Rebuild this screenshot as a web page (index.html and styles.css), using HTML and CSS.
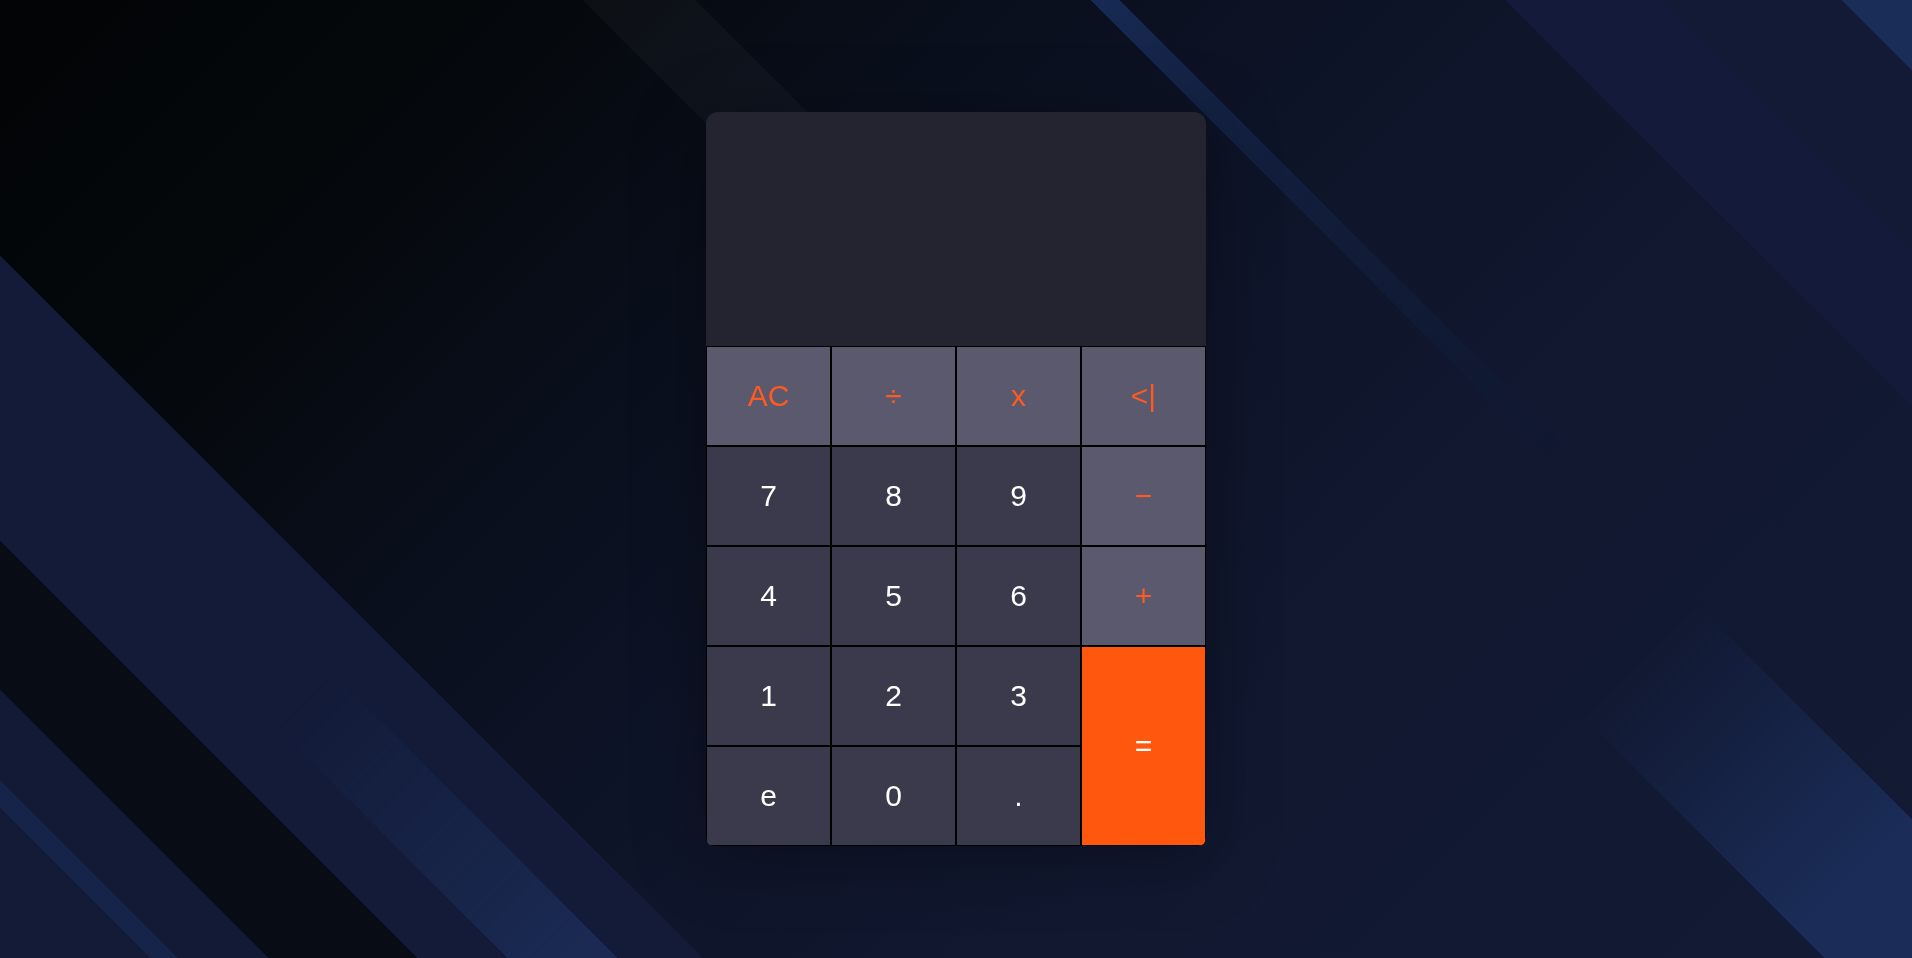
FILE: index.html
```html
<!DOCTYPE html>
<html lang="en">
<head>
<meta charset="utf-8">
<title>Calculator</title>
<link rel="stylesheet" href="styles.css">
</head>
<body>
<div class="page">
  <div class="calculator">
    <div class="display"></div>
    <div class="keys">
      <button class="key op">AC</button>
      <button class="key op">÷</button>
      <button class="key op">x</button>
      <button class="key op">&lt;|</button>
      <button class="key">7</button>
      <button class="key">8</button>
      <button class="key">9</button>
      <button class="key op">−</button>
      <button class="key">4</button>
      <button class="key">5</button>
      <button class="key">6</button>
      <button class="key op">+</button>
      <button class="key">1</button>
      <button class="key">2</button>
      <button class="key">3</button>
      <button class="key equals">=</button>
      <button class="key">e</button>
      <button class="key">0</button>
      <button class="key">.</button>
    </div>
  </div>
</div>
</body>
</html>
```
FILE: styles.css
```css
* { box-sizing: border-box; }

html, body {
  margin: 0;
  height: 100%;
}

body {
  overflow: hidden;
  font-family: "Liberation Sans", Arial, sans-serif;
  background:
    linear-gradient(45deg,
      #131b36 0%, #131b36 5.23%,
      #16244a 5.23%, #16244a 6.17%,
      #121a35 6.17%, #121a35 9.34%,
      #080c14 9.34%, #080c14 14.56%,
      #131b38 14.56%, #131b38 24.46%,
      transparent 24.46%, transparent 85.85%,
      #141b3a 85.85%, #141b3a 91.25%,
      #121a35 91.25%, #121a35 97.53%,
      #1a2d58 97.53%, #1a2d58 100%),
    linear-gradient(135deg,
      #020405 0%, #05090d 20%, #0a0f1d 35%, #0e1428 50%, #111830 70%, #131a34 100%);
}

body::before {
  content: "";
  position: fixed;
  inset: 0;
  pointer-events: none;
  background: linear-gradient(45deg,
    transparent 53.69%, rgba(255,255,255,0.03) 53.69%, rgba(255,255,255,0.03) 57.6%,
    transparent 57.6%, transparent 71.39%,
    #1b3263 71.39%, #1b3263 72.37%, transparent 72.37%);
  -webkit-mask-image: linear-gradient(135deg, #000 32%, rgba(0,0,0,0.35) 50%, transparent 70%);
  mask-image: linear-gradient(135deg, #000 32%, rgba(0,0,0,0.35) 50%, transparent 70%);
}

.page {
  height: 100%;
  display: flex;
  align-items: center;
  justify-content: center;
}

.page::before,
.page::after {
  content: "";
  position: fixed;
  inset: 0;
  pointer-events: none;
}

.page::before {
  background: linear-gradient(45deg,
    transparent 17.67%, #1a2a52 17.67%, #1a2a52 21.5%, transparent 21.5%);
  -webkit-mask-image: linear-gradient(135deg, transparent 35%, #000 53%);
  mask-image: linear-gradient(135deg, transparent 35%, #000 53%);
}

.page::after {
  background: linear-gradient(45deg,
    transparent 63.57%, #1a2c57 63.57%, #1a2c57 71.46%, transparent 71.46%);
  -webkit-mask-image: linear-gradient(135deg, transparent 80%, #000 95%);
  mask-image: linear-gradient(135deg, transparent 80%, #000 95%);
}

.calculator {
  position: relative;
  z-index: 1;
  width: 500px;
  border-radius: 12px 12px 8px 8px;
  overflow: hidden;
  display: flex;
  flex-direction: column;
  box-shadow: 0 10px 70px rgba(0, 0, 0, 0.35);
}

.display {
  height: 234px;
  background: #242330;
}

.keys {
  display: grid;
  grid-template-columns: repeat(4, 125px);
  grid-auto-rows: 100px;
}

.key {
  margin: 0;
  padding: 0;
  border: 1px solid #000;
  background: #3b3a4c;
  color: #ffffff;
  font-family: "Liberation Sans", Arial, sans-serif;
  font-size: 30px;
  line-height: 1;
  cursor: pointer;
}

.key.op {
  background: #5a596d;
  color: #ff5a1f;
}

.key.equals {
  grid-row: span 2;
  background: #ff570e;
  color: #ffffff;
}
```
